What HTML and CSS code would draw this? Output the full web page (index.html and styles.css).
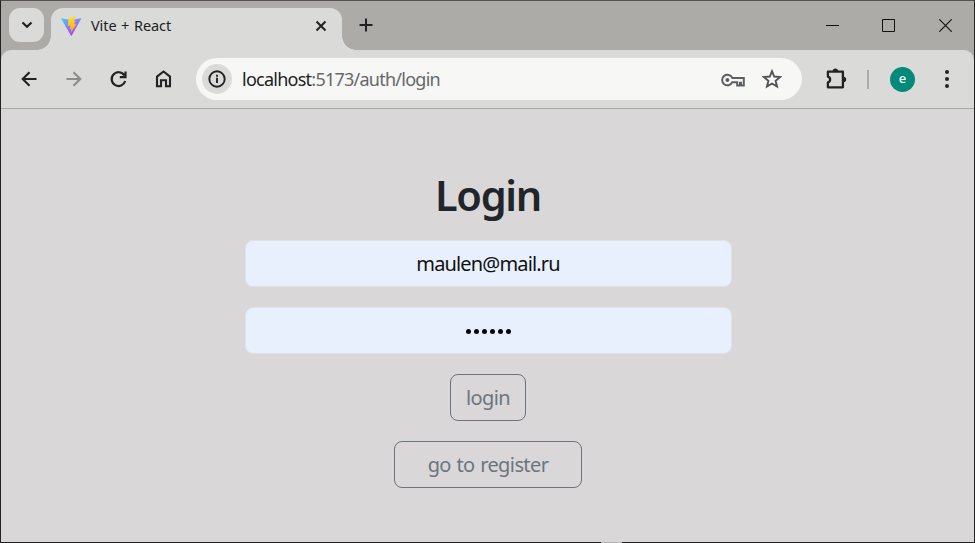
FILE: index.html
```html
<!DOCTYPE html>
<html lang="en">
<head>
<meta charset="utf-8">
<title>Vite + React</title>
<link rel="stylesheet" href="styles.css">
</head>
<body>
<div class="window">
  <header class="titlebar">
    <button class="tab-search" aria-label="Search tabs">
      <svg width="12" height="8" viewBox="0 0 12 8"><path d="M1.500 1.500 6 5.800l4.500-4.300" fill="none" stroke="#202224" stroke-width="2.200"/></svg>
    </button>
    <div class="tab">
      <svg class="favicon" width="21" height="21" viewBox="0 0 21 21">
        <defs>
          <linearGradient id="shield" x1="0" y1="0" x2="0.600" y2="1"><stop offset="0" stop-color="#41d1ff"/><stop offset="1" stop-color="#bd34fe"/></linearGradient>
          <linearGradient id="bolt" x1="0.400" y1="0" x2="0.600" y2="1"><stop offset="0" stop-color="#ffdd35"/><stop offset="1" stop-color="#ffa800"/></linearGradient>
        </defs>
        <path d="M.7 2.300 10 4l9.600-1.700q.8 0 .4.800l-9.200 16.300q-.5.700-.9 0L.3 3.100q-.3-.8.4-.8Z" fill="url(#shield)"/>
        <path d="m15 .6-7.200 1.200-1 8.200 2.700-.4-.7 3.500 1.600-.4-.8 4.400 5.900-9.200-2.500.4 1.600-3.200-1.800.4Z" fill="url(#bolt)"/>
      </svg>
      <span class="tab-title">Vite + React</span>
      <svg class="tab-close" width="12" height="12" viewBox="0 0 12 12"><path d="m1.500 1.500 9 9m0-9-9 9" stroke="#202224" stroke-width="2"/></svg>
    </div>
    <svg class="new-tab" width="14" height="14" viewBox="0 0 14 14"><path d="M7 .5v13M.5 7h13" stroke="#202224" stroke-width="2"/></svg>
    <div class="window-controls">
      <svg width="13" height="13" viewBox="0 0 13 13"><path d="M0 6.500h13" stroke="#111"/></svg>
      <svg width="13" height="13" viewBox="0 0 13 13"><path d="M.5.5h12v12H.5Z" fill="none" stroke="#111"/></svg>
      <svg width="13" height="13" viewBox="0 0 13 13"><path d="m.3.3 12.400 12.400m0-12.400L.3 12.700" stroke="#111" stroke-width="1.100"/></svg>
    </div>
  </header>
  <nav class="toolbar">
    <div class="nav-icons">
      <svg width="20" height="20" viewBox="0 0 20 20"><path d="M17.500 10H3.700m6.800-6.800L3.700 10l6.800 6.800" fill="none" stroke="#202224" stroke-width="2.100"/></svg>
      <svg width="20" height="20" viewBox="0 0 20 20"><path d="M2.500 10h13.800M9.500 3.200l6.800 6.800-6.800 6.800" fill="none" stroke="#8c8c8c" stroke-width="2.100"/></svg>
      <svg width="20" height="20" viewBox="0 0 20 20"><path d="M15.300 6.300A6.900 6.900 0 1 0 16.200 12M16.500 2.500v5.600h-5.700" fill="none" stroke="#202224" stroke-width="2.200"/></svg>
      <svg width="20" height="20" viewBox="0 0 20 20"><path d="M3 7.600 9.500 2.500 16 7.600v9.600h-4v-6H7v6H3Z" fill="none" stroke="#202224" stroke-width="2.100"/></svg>
    </div>
    <div class="address">
      <span class="site-info">
        <svg width="18" height="18" viewBox="0 0 18 18"><circle cx="9" cy="9" r="7.700" fill="none" stroke="#202224" stroke-width="1.900"/><path d="M9 7.800V13M9 4.700v2" stroke="#202224" stroke-width="1.900"/></svg>
      </span>
      <span class="url"><span class="host">localhost</span>:5173/auth/login</span>
      <svg class="key" width="24" height="14" viewBox="0 0 24 14"><path d="M11.300 4.900A5.300 5.300 0 1 0 11.300 9.200h4.900v3.200H19V9.700h1v2.700h2.800V4.900Z" fill="none" stroke="#5c5f62" stroke-width="2"/><circle cx="6.400" cy="7" r="2" fill="#5c5f62"/></svg>
      <svg class="star" width="20" height="20" viewBox="0 0 20 20"><path d="m10 2.200 2.200 5.300 5.900.5-4.500 3.800 1.400 5.700L10 14.500l-5 3 1.400-5.700L1.900 8l5.900-.5Z" fill="none" stroke="#515457" stroke-width="1.900"/></svg>
    </div>
    <svg class="extension" width="22" height="22" viewBox="0 0 22 22"><path d="M2.900 3.700h15v15.600h-15v-4.900a3 3 0 0 0 0-5.800Z" fill="none" stroke="#202224" stroke-width="2.300" stroke-linejoin="round"/><path d="M7.700 3.200a2.700 2.700 0 0 1 5.400 0ZM18.500 8.800a2.700 2.700 0 0 1 0 5.400Z" fill="#202224"/></svg>
    <span class="divider"></span>
    <span class="avatar">e</span>
    <svg class="menu" width="4" height="18" viewBox="0 0 4 18"><g fill="#202224"><circle cx="2" cy="2" r="2"/><circle cx="2" cy="9" r="2"/><circle cx="2" cy="16" r="2"/></g></svg>
  </nav>
  <main class="page">
    <h1>Login</h1>
    <div class="field"><span class="email">maulen@mail.ru</span></div>
    <div class="field"><span class="dots"><i></i><i></i><i></i><i></i><i></i><i></i></span></div>
    <button class="btn btn-login">login</button>
    <button class="btn btn-register">go to register</button>
  </main>
  <span class="edge-mark"></span>
</div>
</body>
</html>
```
FILE: styles.css
```css
* { box-sizing: border-box; }
body { margin: 0; font-family: "Noto Sans", "Open Sans", sans-serif; }
svg { display: block; flex: none; }
button { padding: 0; border: 0; font-family: inherit; }
.window {
  position: relative;
  width: 975px;
  height: 543px;
  border: 1px solid #222;
  border-top-color: #535250;
  background: #acaba7;
}
.edge-mark { position: absolute; left: 600px; bottom: -1px; width: 21px; height: 1px; background: #b5b3b4; }
.titlebar { display: flex; height: 49px; }
.tab-search {
  display: grid;
  place-items: center;
  width: 35px;
  height: 34px;
  margin: 7px 0 0 8px;
  border-radius: 11px;
  background: #dadad8;
}
.tab {
  position: relative;
  display: flex;
  align-items: center;
  width: 291px;
  height: 42px;
  margin: 7px 0 0 7px;
  padding: 0 15px 6px 10px;
  border-radius: 12px 12px 0 0;
  background: #dadad8;
}
.tab::before, .tab::after {
  content: "";
  position: absolute;
  bottom: 0;
  width: 14px;
  height: 14px;
}
.tab::before { left: -14px; background: radial-gradient(circle at 0 0, transparent 13.500px, #dadad8 14px); }
.tab::after { right: -14px; background: radial-gradient(circle at 100% 0, transparent 13.500px, #dadad8 14px); }
.tab-title { margin: -2px 0 0 9px; color: #202224; font-size: 14.500px; line-height: 20px; letter-spacing: -0.1px; word-spacing: 1px; white-space: nowrap; }
.tab-close { margin-left: auto; }
.new-tab { margin: 17px 0 0 17px; }
.window-controls { display: flex; gap: 43px; margin: 18px 22px 0 auto; }
.window-controls svg:nth-child(-n+2) { position: relative; left: -1px; }
.toolbar {
  display: flex;
  align-items: center;
  height: 59px;
  padding-left: 18px;
  border-bottom: 1px solid #aaa9aa;
  border-radius: 10px 10px 0 0;
  background: #dadad8;
}
.nav-icons { display: flex; gap: 25px; }
.address {
  display: flex;
  align-items: center;
  width: 606px;
  height: 42px;
  margin-left: 22px;
  padding: 0 20px 0 6px;
  border-radius: 21px;
  background: #f7f7f5;
}
.site-info { display: grid; place-items: center; width: 30px; height: 30px; border-radius: 50%; background: #dadad9; }
.url { margin-left: 10px; color: #66686b; font-size: 18px; line-height: 26px; letter-spacing: -0.75px; white-space: nowrap; }
.host { color: #202224; }
.key { margin: 1px 1px 0 auto; }
.star { margin-left: 16px; }
.extension { margin-left: 23px; }
.divider { width: 2px; height: 19px; margin-left: 20px; background: #acacaa; }
.avatar { width: 25px; height: 25px; margin-left: 21px; border-radius: 50%; background: #05897b; color: #fff; font: 500 13px/23px "Noto Sans", sans-serif; text-align: center; }
.menu { margin-left: 30px; }
.page {
  display: flex;
  flex-direction: column;
  align-items: center;
  height: 433px;
  padding: 61px 0 0 1px;
  background: #d9d7d8;
}
h1 { margin: 0 0 20px; color: #212529; font-size: 41.500px; font-weight: 600; line-height: 50px; letter-spacing: -1.3px; }
.field {
  display: flex;
  align-items: center;
  justify-content: center;
  width: 487px;
  height: 47px;
  margin-bottom: 20px;
  border: 1px solid #dee2e6;
  border-radius: 8px;
  background: #e8f0fe;
}
.email { color: #101010; font-size: 20px; line-height: 30px; letter-spacing: -0.85px; }
.dots { display: flex; gap: 3px; margin-top: 2px; }
.dots i { width: 5px; height: 5px; border-radius: 50%; background: #080808; }
.btn { height: 47px; margin-bottom: 20px; border: 1px solid #6c757d; border-radius: 8px; background: transparent; color: #6c757d; font-size: 20px; line-height: 30px; letter-spacing: -0.6px; word-spacing: 1px; white-space: nowrap; }
.btn-login { width: 76px; }
.btn-register { width: 188px; }
```
